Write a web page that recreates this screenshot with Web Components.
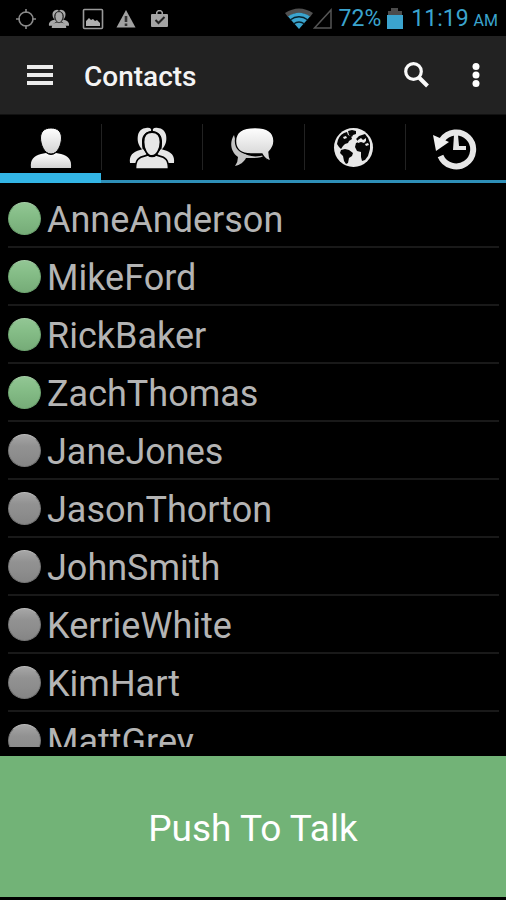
<!DOCTYPE html>
<html lang="en">
<head>
<meta charset="utf-8">
<meta name="viewport" content="width=device-width, initial-scale=1">
<title>Contacts</title>
<style>
  html, body { margin: 0; background: #000; }
  body { font-family: Roboto, "Noto Sans", sans-serif; }
</style>
</head>
<body>
<contacts-app></contacts-app>

<template id="tpl-status">
  <style>
    :host { display: flex; align-items: center; justify-content: space-between; box-sizing: border-box; height: 36px; padding: 2px 8px 0 16px; background: #000; color: #3ba4ce; font-size: 23px; line-height: 34px; }
    div { display: flex; align-items: center; }
    svg { display: block; }
    .left { gap: 12px; }
    .right { gap: 6px; }
    .radio { gap: 0; }
    .time { gap: 5px; margin-left: 2px; }
    small { font-size: 16px; line-height: 20px; padding-top: 4px; }
  </style>
  <div class="left">
    <svg width="20" height="20" viewBox="0 0 20 20" fill="none" stroke="#8a8a8a" stroke-width="1.6"><circle cx="10" cy="10" r="7"/><path d="M10 0v4M10 16v4M0 10h4M16 10h4"/></svg>
    <svg width="22" height="20" viewBox="0 0 46 44" fill="#a8a8a8"><path d="M1 37c-1-8 3-11 10-13l3-1 4 5c-5 2-8 5-9 9zM45 37c1-8-3-11-10-13l-3-1-4 5c5 2 8 5 9 9z"/><path d="M17 2c4-1 6 1 5 3-5 1-9 4-9 10 0 4 0 7 1 9-5-4-6-10-5-15 1-4 4-7 8-7zM29 2c-4-1-6 1-5 3 5 1 9 4 9 10 0 4 0 7-1 9 5-4 6-10 5-15-1-4-4-7-8-7z"/><path d="M7 42c0-8 3-11 9-12l3-1q4 3 8 0l3 1c6 1 9 4 9 12z"/><path d="M23 6c5.500 0 8.500 3.500 8.500 10S28 30 23 30s-8.500-7-8.500-14S17.500 6 23 6z" stroke="#222" stroke-width="1.500"/></svg>
    <svg width="22" height="22" viewBox="0 0 22 22"><rect x="1.500" y="1.500" width="19" height="19" rx="1" fill="none" stroke="#999" stroke-width="1.600"/><path d="M4 18v-5l3-3 2 2 2-1 2 2 2-1 3 3v3z" fill="#b0b0b0"/></svg>
    <svg width="20" height="20" viewBox="0 0 20 20"><path d="M10 1l9.500 17.500H.5z" fill="#a2a2a2"/><path d="M8.700 7h2.600v6H8.700zM8.700 14.500h2.600V17H8.700z" fill="#333"/></svg>
    <svg width="22" height="20" viewBox="0 0 22 20"><path d="M4 5h4V3l2-2h3l2 2v2h4q1 0 1 1v11q0 1-1 1H4q-1 0-1-1V6q0-1 1-1zM9.500 5h4V3.500l-1-1h-2l-1 1z" fill="#a4a4a4" fill-rule="evenodd"/><path d="M7.500 11l3 3 6-6" fill="none" stroke="#222" stroke-width="2"/></svg>
  </div>
  <div class="right">
    <div class="radio">
      <svg width="28" height="22" viewBox="0 0 28 22"><path d="M0 5Q14-4 28 5L25 9Q14 1 3 9z" fill="#505050"/><path d="M3 8.500Q14 1 25 8.500L14 21z" fill="#3ba4ce"/><path d="M5 12Q14 5.500 23 12M8.500 16Q14 12 19.500 16" fill="none" stroke="#06202b" stroke-width="1.300"/></svg>
      <svg width="20" height="22" viewBox="0 0 20 22"><path d="M18 2v18H1.500z" fill="none" stroke="#555" stroke-width="1.500"/></svg>
    </div>
    <span>72%</span>
    <svg width="16" height="22" viewBox="0 0 16 22"><path d="M1 8V3h3V0h7v3h4v5z" fill="#4b4b4b"/><path d="M0 7h16v14H0z" fill="#3ba4ce"/></svg>
    <div class="time"><span>11:19</span><small>AM</small></div>
  </div>
</template>

<template id="tpl-bar">
  <style>
    :host { display: flex; align-items: center; height: 78px; padding: 0 16px 0 18px; background: #222; color: #f4f4f4; border-bottom: 1px solid #111; }
    h1 { flex: 1; margin: 0 0 0 22px; padding-top: 3px; font-size: 28px; line-height: 36px; font-weight: 500; }
    button { display: grid; place-items: center; width: 44px; height: 48px; padding: 0; border: 0; background: none; color: inherit; }
    button.more { width: 28px; margin-left: 24px; }
    svg { display: block; }
  </style>
  <button aria-label="Menu"><svg width="28" height="20" viewBox="0 0 28 20" fill="#ececec"><path d="M1 0h26v4H1zM1 8h26v4H1zM1 16h26v4H1z"/></svg></button>
  <h1><slot></slot></h1>
  <button aria-label="Search"><svg width="28" height="28" viewBox="0 0 28 28" fill="none" stroke="#fafafa"><circle cx="11.500" cy="10.500" r="7.800" stroke-width="3.200"/><path d="M17 16.500l8.500 8.500" stroke-width="4"/></svg></button>
  <button class="more" aria-label="More options"><svg width="8" height="26" viewBox="0 0 8 26" fill="#fff"><circle cx="4" cy="4.500" r="3.500"/><circle cx="4" cy="13" r="3.500"/><circle cx="4" cy="21.500" r="3.500"/></svg></button>
</template>

<template id="tpl-tab">
  <style>
    :host { display: block; flex: 1; min-width: 0; }
    button { position: relative; display: flex; flex-direction: column; align-items: center; box-sizing: border-box; width: 100%; height: 68px; padding: 11px 0 0; border: 0; border-bottom: 3px solid #2e8fb8; background: #000; }
    :host(:not(:first-child)) button::before { content: ""; position: absolute; left: 0; top: 9px; width: 1px; height: 46px; background: #222; }
    :host([selected]) button { border-bottom: 10px solid #33b5e5; }
    ::slotted(svg) { display: block; }
  </style>
  <button role="tab"><slot></slot></button>
</template>

<template id="tpl-row">
  <style>
    :host { display: flex; align-items: center; gap: 6px; box-sizing: border-box; height: 58px; border-bottom: 2px solid #191919; color: #b4b4b4; font-size: 36px; line-height: 48px; }
    i { box-sizing: border-box; width: 33px; height: 33px; border-radius: 50%; background: linear-gradient(#a6a6a6, #929292 35%, #8c8c8c 70%, #858585); border: 1px solid #777; border-top-color: #bbb; }
    :host([online]) i { background: linear-gradient(#92c694, #85bd87 40%, #76ac78); border-color: #70a672; border-top-color: #a5cda6; }
    span { padding-top: 4px; }
  </style>
  <i></i><span><slot></slot></span>
</template>

<template id="tpl-ptt">
  <style>
    :host { display: block; }
    button { display: block; width: 100%; height: 141px; padding: 4px 0 0; border: 0; background: #72b377; color: #fff; font-family: inherit; font-size: 37px; line-height: 48px; text-align: center; }
  </style>
  <button><slot></slot></button>
</template>

<template id="tpl-app">
  <style>
    :host { display: flex; flex-direction: column; height: 100vh; background: #000; }
    nav { display: flex; }
    ul { flex: 1; min-height: 0; overflow: hidden; margin: 0 7px 9px 8px; padding: 7px 0 0; list-style: none; }
    push-to-talk { margin-bottom: 3px; }
  </style>
  <status-bar></status-bar>
  <app-bar>Contacts</app-bar>
  <nav role="tablist">
    <icon-tab selected label="Contacts">
      <svg width="44" height="44" viewBox="0 0 44 44"><defs><linearGradient id="g1" x2="0" y2="1"><stop stop-color="#fff"/><stop offset="1" stop-color="#d2d2d2"/></linearGradient></defs><g fill="url(#g1)"><path d="M2 42c-1-9 3-12 10-14l5-1q5 4 10 0l5 1c7 2 11 5 10 14z"/><path d="M22 2c7 0 10.500 4 10.500 10S29 28 22 28 11.500 18 11.500 12 15 2 22 2z" stroke="#000"/></g></svg>
    </icon-tab>
    <icon-tab label="Groups">
      <svg width="46" height="44" viewBox="0 0 46 44" fill="#e6e6e6"><path d="M1 37c-1-8 3-11 10-13l3-1 4 5c-5 2-8 5-9 9zM45 37c1-8-3-11-10-13l-3-1-4 5c5 2 8 5 9 9z"/><path d="M17 2c4-1 6 1 5 3-5 1-9 4-9 10 0 4 0 7 1 9-5-4-6-10-5-15 1-4 4-7 8-7zM29 2c-4-1-6 1-5 3 5 1 9 4 9 10 0 4 0 7-1 9 5-4 6-10 5-15-1-4-4-7-8-7z"/><path d="M6.500 43c0-9 3-12 9.500-13l3-1q4 3 8 0l3 1c6.500 1 9.500 4 9.500 13z" stroke="#000" stroke-width="1.600"/><path d="M23 6c5.500 0 8.500 3.500 8.500 10S28 30 23 30s-8.500-7-8.500-14S17.500 6 23 6z" stroke="#000" stroke-width="1.800"/></svg>
    </icon-tab>
    <icon-tab label="Messages">
      <svg width="46" height="44" viewBox="0 0 46 44"><defs><linearGradient id="g3" x2="0" y2="1"><stop stop-color="#fff"/><stop offset="1" stop-color="#cfcfcf"/></linearGradient></defs><path d="M4 9C-1 17 1 26 8 31q0 5-3 9c5-1 9-4 11-8h8c5 0 9-1 11-3C20 33 8 29 4 9z" fill="#c4c4c4"/><path d="M25 1.500C38 1.500 44 6 44 15c0 5-2 8-5 11q0 5 2 9c-5-1-7-3-9-7H21C11 28 5.500 23 5.500 15 5.500 6 12 1.500 25 1.500z" fill="url(#g3)" stroke="#000" stroke-width="1.400"/></svg>
    </icon-tab>
    <icon-tab label="Channels">
      <svg width="44" height="44" viewBox="0 0 44 44"><circle cx="21.500" cy="21.500" r="19.500" fill="#e8e8e8"/><g fill="#050505"><path d="M5 18q1-8 7-11l3-1 1 3 3 1 1 3-3 2-1 2-3 1-2 2-2 3-2-2z"/><path d="M16 5l4-1 4 1 0 3-3 1-1 2-3-2z"/><path d="M9 24l4-1 4 1 4 3-1 3-3 2-1 5-2 1-2-3-1-5-3-3z"/><path d="M24 13l3-3 3-1 3-1q4 4 5 9v6l-2 7-3 4-3 1-1-4v-5l-4-1-2-4 1-4 3-1z"/></g><path d="M26 14l3-2 2 2 3-2v3l-2 2-3-1-3 1zM33 18l3-1 1 2-3 1zM11 11l3-1 1 2-3 1z" fill="#e8e8e8"/></svg>
    </icon-tab>
    <icon-tab label="History">
      <svg width="46" height="44" viewBox="0 0 46 44"><path d="M10 14A17 17 0 1 1 8.500 30" fill="none" stroke="#e6e6e6" stroke-width="6"/><path d="M1 9l16 7-13 9z" fill="#f0f0f0"/><path d="M22 9h4l1 11h7v4H21z" fill="#e6e6e6"/></svg>
    </icon-tab>
  </nav>
  <ul>
    <li><contact-row online>AnneAnderson</contact-row></li>
    <li><contact-row online>MikeFord</contact-row></li>
    <li><contact-row online>RickBaker</contact-row></li>
    <li><contact-row online>ZachThomas</contact-row></li>
    <li><contact-row>JaneJones</contact-row></li>
    <li><contact-row>JasonThorton</contact-row></li>
    <li><contact-row>JohnSmith</contact-row></li>
    <li><contact-row>KerrieWhite</contact-row></li>
    <li><contact-row>KimHart</contact-row></li>
    <li><contact-row>MattGrey</contact-row></li>
  </ul>
  <push-to-talk>Push To Talk</push-to-talk>
</template>

<script>
  class TemplateElement extends HTMLElement {
    constructor() {
      super();
      const tpl = document.getElementById(this.constructor.template);
      this.attachShadow({ mode: "open" }).append(tpl.content.cloneNode(true));
    }
  }
  class StatusBar extends TemplateElement { static template = "tpl-status"; }
  class AppBar extends TemplateElement { static template = "tpl-bar"; }
  class IconTab extends TemplateElement {
    static template = "tpl-tab";
    connectedCallback() {
      const button = this.shadowRoot.querySelector("button");
      button.setAttribute("aria-label", this.getAttribute("label"));
      button.setAttribute("aria-selected", this.hasAttribute("selected"));
      button.addEventListener("click", () => {
        for (const tab of this.parentElement.children) {
          tab.toggleAttribute("selected", tab === this);
          tab.shadowRoot.querySelector("button").setAttribute("aria-selected", tab === this);
        }
      });
    }
  }
  class ContactRow extends TemplateElement { static template = "tpl-row"; }
  class PushToTalk extends TemplateElement { static template = "tpl-ptt"; }
  class ContactsApp extends TemplateElement { static template = "tpl-app"; }
  customElements.define("status-bar", StatusBar);
  customElements.define("app-bar", AppBar);
  customElements.define("icon-tab", IconTab);
  customElements.define("contact-row", ContactRow);
  customElements.define("push-to-talk", PushToTalk);
  customElements.define("contacts-app", ContactsApp);
</script>
</body>
</html>
